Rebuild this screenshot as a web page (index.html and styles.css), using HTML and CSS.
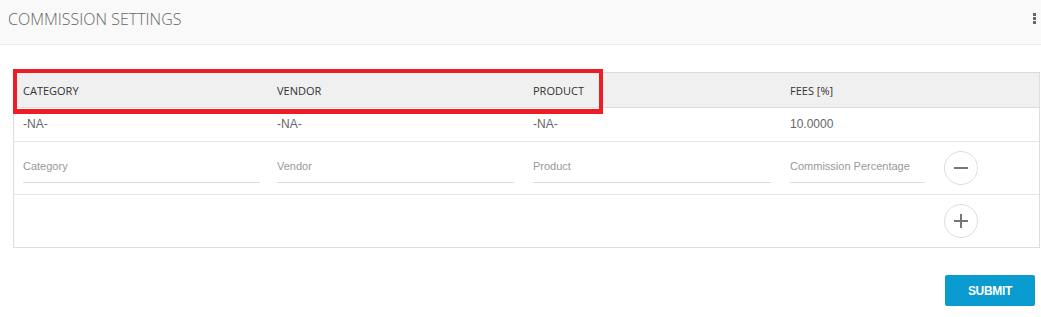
FILE: index.html
```html
<!DOCTYPE html>
<html>
<head>
<meta charset="utf-8">
<link rel="stylesheet" href="styles.css">
</head>
<body>
<div class="topbar">
  <div class="title">COMMISSION SETTINGS</div>
  <div class="kebab"><span></span><span></span><span></span></div>
</div>
<div class="content">
  <div class="table">
    <div class="row head">
      <div class="cell">CATEGORY</div>
      <div class="cell">VENDOR</div>
      <div class="cell">PRODUCT</div>
      <div class="cell">FEES [%]</div>
      <div class="cell"></div>
    </div>
    <div class="row data">
      <div class="cell">-NA-</div>
      <div class="cell">-NA-</div>
      <div class="cell">-NA-</div>
      <div class="cell">10.0000</div>
      <div class="cell"></div>
    </div>
    <div class="row form">
      <div class="cell"><input class="field" placeholder="Category"></div>
      <div class="cell"><input class="field" placeholder="Vendor"></div>
      <div class="cell"><input class="field" placeholder="Product"></div>
      <div class="cell"><input class="field" placeholder="Commission Percentage"></div>
      <div class="cell"><button class="circle"><svg width="16" height="16" viewBox="0 0 16 16"><path d="M1 8h14" stroke="#777" stroke-width="2"/></svg></button></div>
    </div>
    <div class="row form last">
      <div class="cell"></div>
      <div class="cell"></div>
      <div class="cell"></div>
      <div class="cell"></div>
      <div class="cell"><button class="circle"><svg width="16" height="16" viewBox="0 0 16 16"><path d="M1 8h14M8 1v14" stroke="#777" stroke-width="2"/></svg></button></div>
    </div>
    <div class="highlight"></div>
  </div>
  <div class="actions"><button class="submit">SUBMIT</button></div>
</div>
</body>
</html>
```

FILE: styles.css
```css
* { box-sizing: border-box; }
body { margin: 0; background: #fff; font-family: Roboto, "Liberation Sans", Arial, sans-serif; }
.topbar {
  height: 45px;
  background: #f9f9f9;
  border-bottom: 1px solid #ececec;
  display: flex;
  align-items: center;
  justify-content: space-between;
  padding: 0 5px 0 8px;
}
.title {
  font-family: "Open Sans", sans-serif;
  font-weight: 300;
  font-size: 16px;
  color: #666;
  margin-top: -6px;
}
.kebab { display: flex; flex-direction: column; gap: 1px; margin-top: -7px; }
.kebab span { width: 3px; height: 3px; background: #666; display: block; }
.content { padding: 27px 1px 0 13px; }
.table {
  position: relative;
  border: 1px solid #dedede;
  border-top-color: #d9d9d9;
}
.row {
  display: grid;
  grid-template-columns: 254px 256px 257px 154px 1fr;
  border-bottom: 1px solid #e6e6e6;
  align-items: center;
}
.row.last { border-bottom: none; height: 52px; }
.cell { padding: 0 10px 0 9px; }
.head { height: 35px; background: #f0f0f0; border-bottom-color: #ddd; }
.head .cell { font-family: "Open Sans", sans-serif; font-size: 11px; color: #333; font-weight: 400; }
.data { height: 34px; }
.data .cell { font-family: "Liberation Sans", Arial, sans-serif; font-size: 12px; color: #666; padding-bottom: 2px; }
.form { height: 53px; }
.field {
  width: 100%;
  border: none;
  border-bottom: 1px solid #ddd;
  height: 30px;
  padding: 0 0 3px;
  margin-top: 0;
  font-family: "Liberation Sans", Arial, sans-serif;
  font-size: 11px;
  color: #555;
  outline: none;
  background: transparent;
}
.field::placeholder { color: #999; }
.row .cell:first-child .field { width: 237px; }
.circle {
  width: 34px;
  height: 34px;
  border-radius: 50%;
  border: 1px solid #ddd;
  background: #fff;
  display: flex;
  align-items: center;
  justify-content: center;
  padding: 0;
}
.highlight {
  position: absolute;
  left: -1px;
  top: -4px;
  width: 590px;
  height: 45px;
  border: 4px solid #ee1c25;
  border-bottom-width: 5px;
  pointer-events: none;
}
.actions { display: flex; justify-content: flex-end; padding: 27px 5px 0 0; }
.submit {
  width: 90px;
  height: 31px;
  background: #0a9bd0;
  color: #fff;
  border: none;
  border-radius: 2px;
  font-family: "Liberation Sans", Arial, sans-serif;
  font-weight: 700;
  font-size: 12px;
  letter-spacing: -0.3px;
}
```
